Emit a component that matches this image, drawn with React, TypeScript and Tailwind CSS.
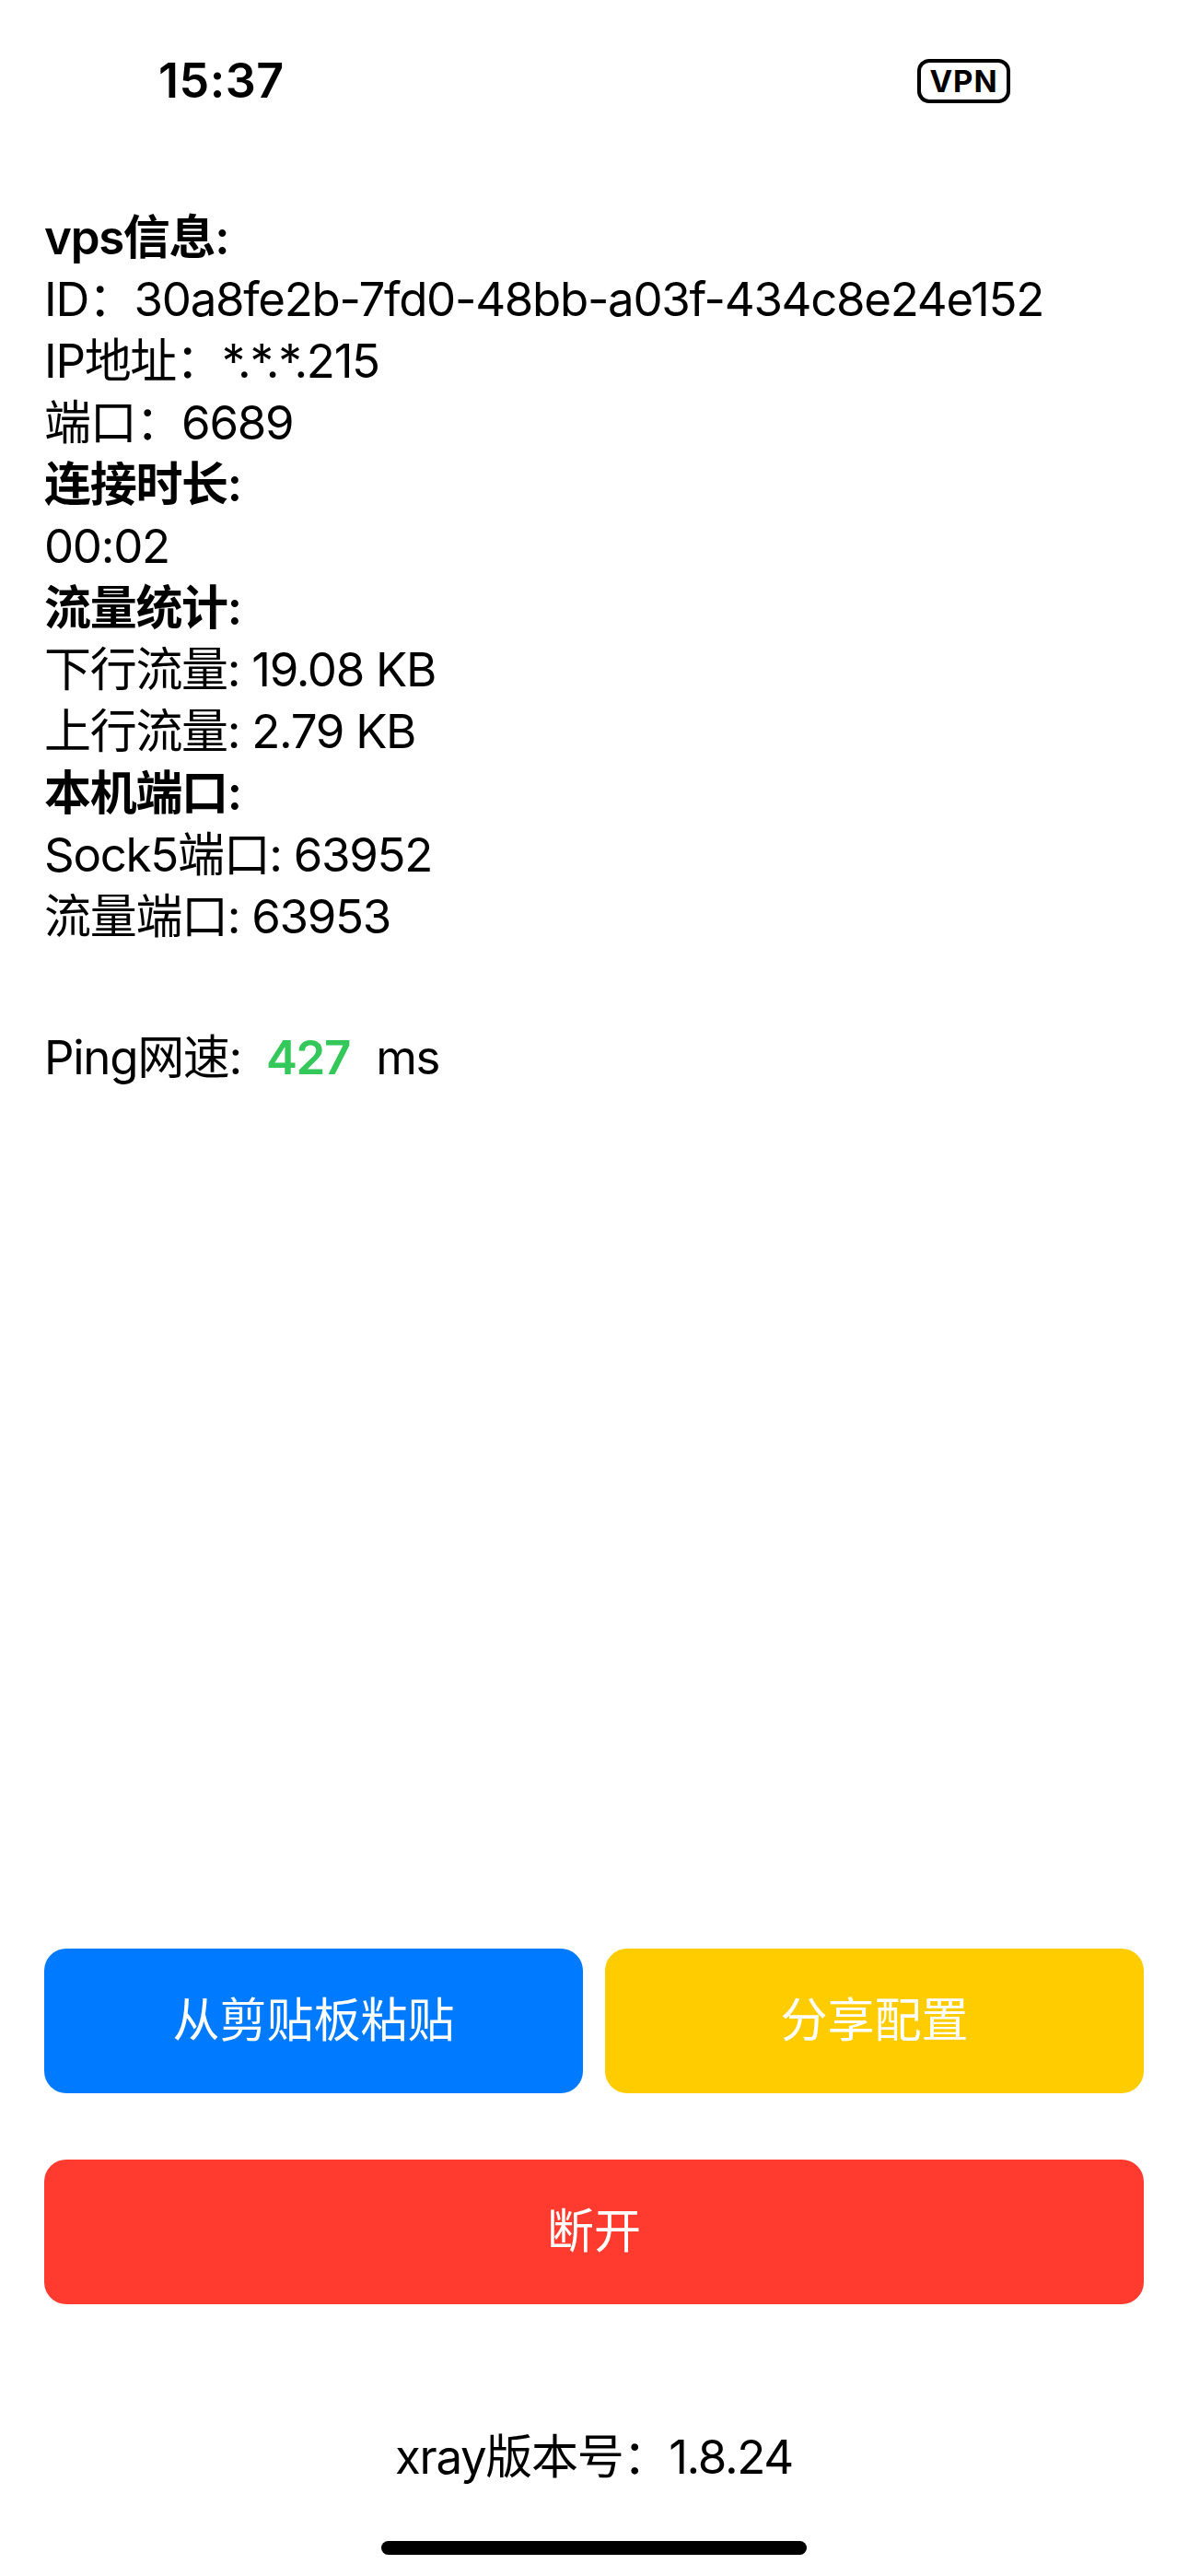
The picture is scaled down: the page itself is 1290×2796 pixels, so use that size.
import React from "react";

const font = { fontFamily: 'Inter, "Noto Sans CJK SC", sans-serif' };

export default function App() {
  const lines: { text: React.ReactNode; bold?: boolean }[] = [
    { text: "vps信息:", bold: true },
    { text: "ID：30a8fe2b-7fd0-48bb-a03f-434c8e24e152" },
    { text: "IP地址：*.*.*.215" },
    { text: "端口：6689" },
    { text: "连接时长:", bold: true },
    { text: "00:02" },
    { text: "流量统计:", bold: true },
    { text: "下行流量: 19.08 KB" },
    { text: "上行流量: 2.79 KB" },
    { text: "本机端口:", bold: true },
    { text: "Sock5端口: 63952" },
    { text: "流量端口: 63953" },
  ];
  return (
    <div
      className="w-[1290px] h-[2796px] bg-white text-black flex flex-col font-['Inter','Noto_Sans_CJK_SC',sans-serif]"
      style={font}
    >
      {/* status bar */}
      <div className="h-[176px] flex items-center shrink-0">
        <div className="pl-[172px] text-[52px] font-semibold leading-none tracking-[0.5px]">15:37</div>
        <div className="ml-auto mr-[193px] w-[101px] h-[48px] border-[4.5px] border-black rounded-[13px] flex items-center justify-center">
          <span className="text-[33px] font-bold leading-none tracking-[1px]">VPN</span>
        </div>
      </div>

      {/* info */}
      <div className="pt-[48px] px-[48px] text-[51px] leading-[67px] tracking-[-1.3px]">
        {lines.map((l, i) => (
          <div key={i} className={l.bold ? "font-semibold" : "font-normal"}>
            {l.text}
          </div>
        ))}
        <div className="mt-[86px] flex items-baseline">
          <span>Ping网速:</span>
          <span className="ml-[27px] font-semibold text-[#34C759]">427</span>
          <span className="ml-[28px]">ms</span>
        </div>
      </div>

      <div className="flex-1" />

      {/* buttons */}
      <div className="px-[48px] flex flex-col gap-[72px] shrink-0">
        <div className="flex gap-[24px]">
          <div className="flex-1 h-[157px] rounded-[24px] bg-[#007AFF] flex items-center justify-center text-white text-[51px]">
            从剪贴板粘贴
          </div>
          <div className="flex-1 h-[157px] rounded-[24px] bg-[#FFCC00] flex items-center justify-center text-white text-[51px]">
            分享配置
          </div>
        </div>
        <div className="h-[157px] rounded-[24px] bg-[#FF3B30] flex items-center justify-center text-white text-[51px]">
          断开
        </div>
      </div>

      <div className="mt-[131.5px] text-center text-[51px] leading-[67px] tracking-[-1.3px] shrink-0">xray版本号：1.8.24</div>

      <div className="mt-[58.5px] mb-[23px] h-[15px] w-[462px] self-center rounded-full bg-black shrink-0" />
    </div>
  );
}
